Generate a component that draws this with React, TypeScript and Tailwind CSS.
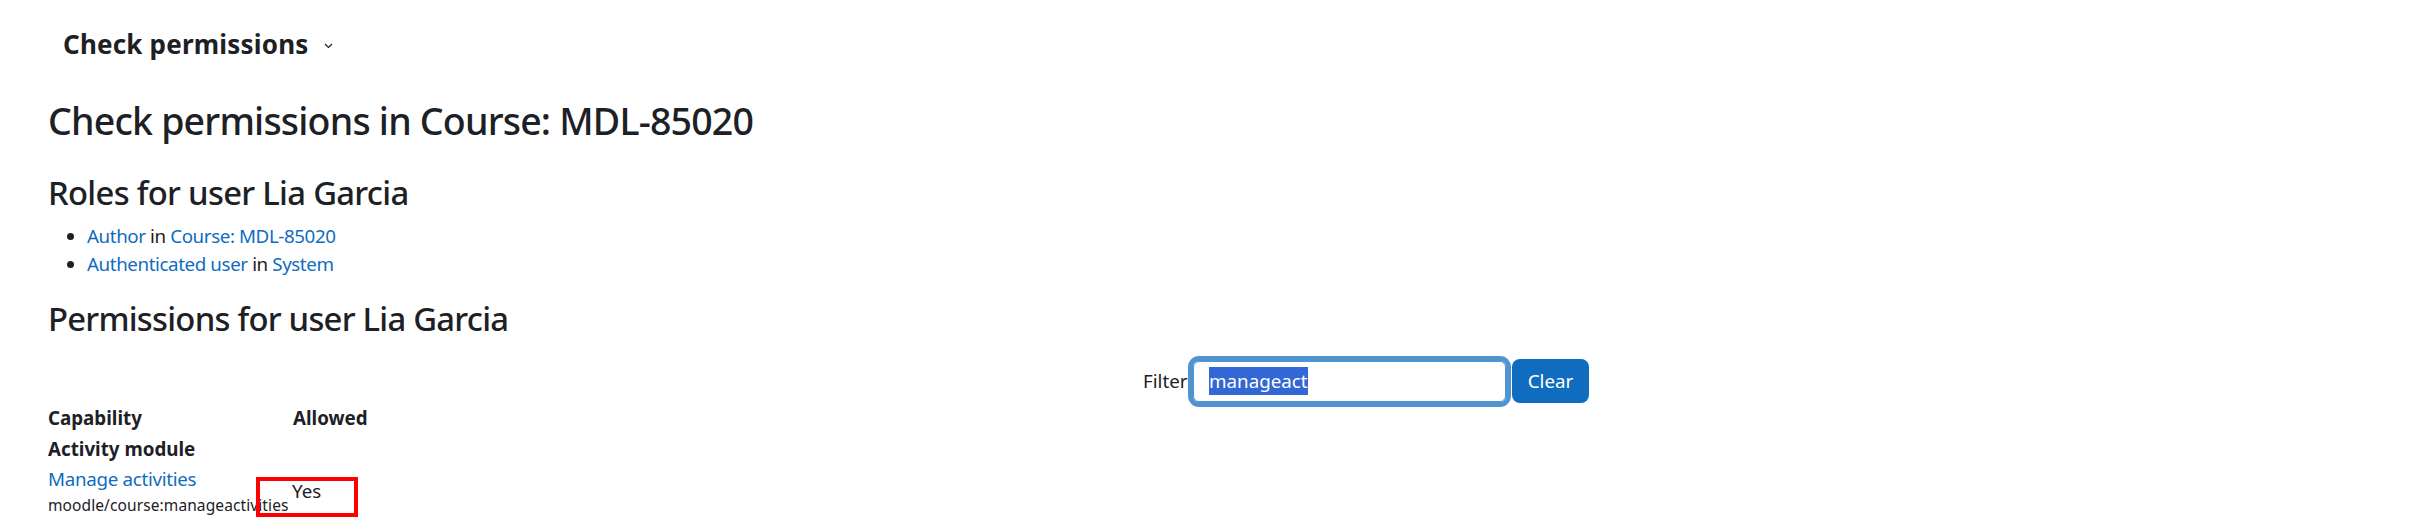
import React from "react";

const font = { fontFamily: '"Noto Sans", "Open Sans", sans-serif' };

const Link = ({ children }: { children: React.ReactNode }) => (
	<a href="#" className="text-[#0f6cbf]">
		{children}
	</a>
);

export default function App() {
	return (
		<div
			className="min-h-[527px] w-[2435px] bg-white pl-[48px] text-[#1d2125]"
			style={font}
		>
			{/* tertiary nav */}
			<div className="flex items-center pt-[25px] pl-[15px]">
				<h2 className="text-[26px] leading-[39px] font-bold tracking-[0.2px]">Check permissions</h2>
				<svg
					className="ml-[15px] mt-[2px] text-[#1d2125]"
					width="9"
					height="6"
					viewBox="0 0 9 6"
					fill="none"
				>
					<path d="M1 1l3.5 3.5L8 1" stroke="currentColor" strokeWidth="1.2" />
				</svg>
			</div>

			<h2 className="mt-[34px] text-[37.5px] leading-[45px] font-medium tracking-[-0.8px]">
				Check permissions in Course: MDL-85020
			</h2>

			<h3 className="mt-[30px] text-[32.8px] leading-[40px] font-medium tracking-[-0.7px]">
				Roles for user Lia Garcia
			</h3>
			<ul className="mt-[9px] list-disc pl-[39px] text-[18.75px] leading-[28px] tracking-[-0.4px]">
				<li>
					<Link>Author</Link> in <Link>Course: MDL-85020</Link>
				</li>
				<li>
					<Link>Authenticated user</Link> in <Link>System</Link>
				</li>
			</ul>

			<h3 className="mt-[21px] text-[32.8px] leading-[40px] font-medium tracking-[-0.75px]">
				Permissions for user Lia Garcia
			</h3>

			{/* filter */}
			<div className="mt-[20px] flex h-[44px] items-center pl-[1095px] text-[18.75px] leading-[28px]">
				<span className="w-[50px]">Filter</span>
				<div className="flex h-[41px] w-[313px] items-center rounded-[6px] border border-[#4f93d1] pl-[15px] shadow-[0_0_0_5px_#4f93d1]">
					<span className="bg-[#3367d6] text-white">manageact</span>
				</div>
				<button className="ml-[6px] h-[44px] w-[77px] rounded-[8px] bg-[#0f6cbf] text-white">
					Clear
				</button>
			</div>

			{/* table */}
			<div className="text-[18.75px]">
				<div className="flex h-[31px] items-center font-bold">
					<div className="w-[245px]">Capability</div>
					<div>Allowed</div>
				</div>
				<div className="flex h-[31px] items-center font-bold">
					<div>Activity module</div>
				</div>
				<div className="flex">
					<div className="w-[208px] whitespace-nowrap">
						<div className="leading-[28px] tracking-[-0.3px]">
							<Link>Manage activities</Link>
						</div>
						<div className="mt-[1px] text-[15.5px] leading-[22px] tracking-[0.1px]">
							moodle/course:manageactivities
						</div>
					</div>
					<div className="mt-[12px] h-[40px] w-[102px] border-4 border-[#ff0000] pl-[32px] leading-[20px]">
						Yes
					</div>
				</div>
			</div>
		</div>
	);
}
